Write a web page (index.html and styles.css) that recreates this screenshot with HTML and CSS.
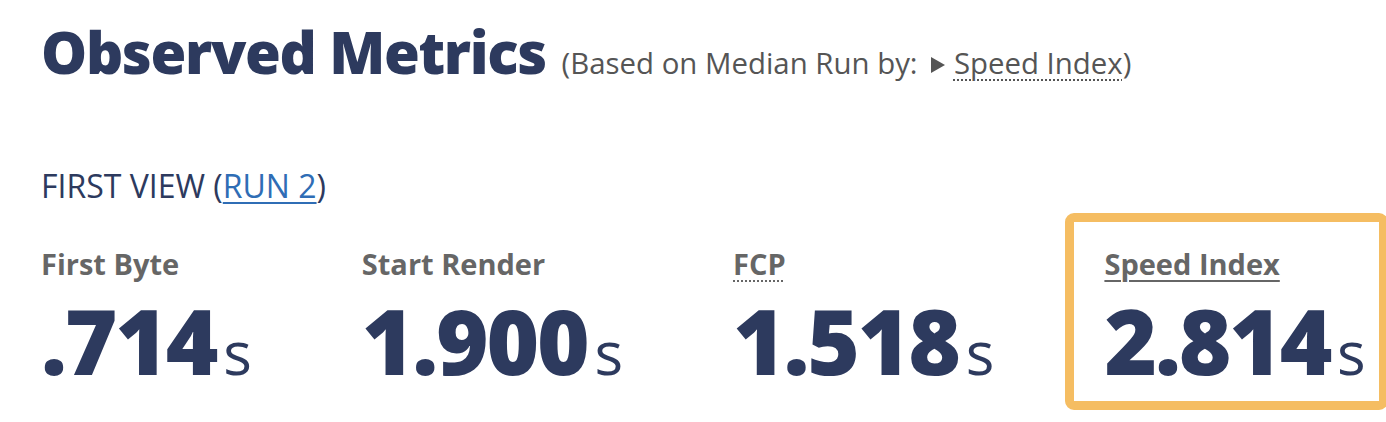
FILE: index.html
```html
<!DOCTYPE html>
<html lang="en">
<head>
<meta charset="utf-8">
<title>Observed Metrics</title>
<link rel="stylesheet" href="styles.css">
</head>
<body>
<div class="page">
  <h1 class="title">Observed Metrics <span class="sub">(Based on Median Run by: <svg class="tri" width="14" height="16" viewBox="0 0 14 16" aria-hidden="true"><path d="M0 0 L14 8 L0 16 Z" fill="#555"/></svg> <span class="dotted">Speed Index</span>)</span></h1>
  <h2 class="view">FIRST VIEW (<a class="run" href="#">RUN 2</a>)</h2>
  <ul class="metrics">
    <li class="metric">
      <div class="label">First Byte</div>
      <div class="value">.714<span class="unit">s</span></div>
    </li>
    <li class="metric">
      <div class="label">Start Render</div>
      <div class="value">1.900<span class="unit">s</span></div>
    </li>
    <li class="metric">
      <div class="label"><span class="dotted">FCP</span></div>
      <div class="value">1.518<span class="unit">s</span></div>
    </li>
    <li class="metric metric-hl">
      <div class="label"><span class="solid">Speed Index</span></div>
      <div class="value">2.814<span class="unit">s</span></div>
    </li>
  </ul>
</div>
</body>
</html>
```
FILE: styles.css
```css
* { box-sizing: border-box; }
html, body { margin: 0; padding: 0; background: #fff; }
body { font-family: "Open Sans", "DejaVu Sans", sans-serif; color: #2d3a5e; }
.page { padding: 8px 0 0 2px; }
.title {
  margin: 0;
  padding-left: 39px;
  font-size: 58px;
  font-weight: 800;
  letter-spacing: -0.023em;
  line-height: 87px;
  color: #2d3a5e;
  white-space: nowrap;
}
.sub {
  font-size: 29.4px;
  font-weight: 400;
  letter-spacing: 0;
  color: #555;
  margin-left: 2px;
}
.tri { vertical-align: 1px; margin: 0 1px 0 6px; }
.dotted {
  text-decoration: underline dotted;
  text-decoration-thickness: 2px;
  text-underline-offset: 5px;
}
.solid {
  text-decoration: underline solid;
  text-decoration-thickness: 2px;
  text-underline-offset: 5px;
}
.view {
  margin: 57px 0 0;
  padding-left: 39px;
  font-size: 32px;
  font-weight: 400;
  line-height: normal;
  color: #2d3a5e;
}
.run { color: #2f6db5; text-decoration: underline; text-decoration-thickness: 2px; text-underline-offset: 4px; }
.metrics {
  list-style: none;
  margin: 6px 0 0;
  padding: 0;
  display: flex;
  gap: 51px;
}
.metric {
  border: 9px solid transparent;
  border-radius: 9px;
  padding: 22px 11px 16px 30px;
}
.metric-hl { border-color: #f5bd62; padding-right: 13px; }
.label {
  font-size: 29px;
  font-weight: 700;
  color: #666;
  line-height: normal;
}
.value {
  margin-top: 12px;
  font-size: 90px;
  font-weight: 800;
  letter-spacing: -0.025em;
  line-height: 1;
  color: #2d3a5e;
  white-space: nowrap;
}
.unit {
  font-size: 60px;
  font-weight: 400;
  letter-spacing: 0;
  margin-left: 7px;
}
```
